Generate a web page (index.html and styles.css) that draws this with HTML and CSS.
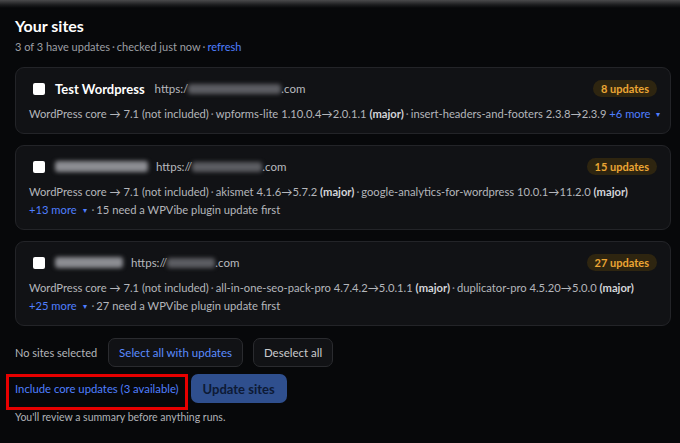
FILE: index.html
```html
<!DOCTYPE html>
<html>
<head>
<meta charset="utf-8">
<link rel="stylesheet" href="styles.css">
</head>
<body>
<main class="page">
  <h1 class="title">Your sites</h1>
  <p class="sub">3 of 3 have updates<span class="dot">·</span>checked just now<span class="dot">·</span><a class="link">refresh</a></p>

  <section class="cards">
    <div class="card">
      <div class="head">
        <span class="check"></span>
        <span class="name">Test Wordpress</span>
        <span class="url">https:/<span class="blur" style="width:93px"></span>.com</span>
        <span class="badge">8 updates</span>
      </div>
      <div class="line">WordPress core → 7.1 (not included)<span class="dot">·</span>wpforms-lite 1.10.0.4→2.0.1.1 <b>(major)</b><span class="dot">·</span>insert-headers-and-footers 2.3.8→2.3.9 <a class="link">+6 more <span class="caret">▾</span></a></div>
    </div>

    <div class="card">
      <div class="head">
        <span class="check"></span>
        <span class="blur name-blur" style="width:93px"></span>
        <span class="url">https://<span class="blur" style="width:70px"></span>.com</span>
        <span class="badge">15 updates</span>
      </div>
      <div class="line">WordPress core → 7.1 (not included)<span class="dot">·</span>akismet 4.1.6→5.7.2 <b>(major)</b><span class="dot">·</span>google-analytics-for-wordpress 10.0.1→11.2.0 <b>(major)</b></div>
      <div class="line"><a class="link">+13 more <span class="caret">▾</span></a> <span class="dot">·</span>15 need a WPVibe plugin update first</div>
    </div>

    <div class="card">
      <div class="head">
        <span class="check"></span>
        <span class="blur name-blur" style="width:68px"></span>
        <span class="url">https://<span class="blur" style="width:48px"></span>.com</span>
        <span class="badge">27 updates</span>
      </div>
      <div class="line">WordPress core → 7.1 (not included)<span class="dot">·</span>all-in-one-seo-pack-pro 4.7.4.2→5.0.1.1 <b>(major)</b><span class="dot">·</span>duplicator-pro 4.5.20→5.0.0 <b>(major)</b></div>
      <div class="line"><a class="link">+25 more <span class="caret">▾</span></a> <span class="dot">·</span>27 need a WPVibe plugin update first</div>
    </div>
  </section>

  <div class="actions">
    <span class="muted">No sites selected</span>
    <button class="btn btn-blue">Select all with updates</button>
    <button class="btn">Deselect all</button>
  </div>

  <div class="actions2">
    <span class="core"><a class="link">Include core updates (3 available)</a><span class="mark"></span></span>
    <button class="btn-primary">Update sites</button>
  </div>

  <p class="note">You'll review a summary before anything runs.</p>
</main>
</body>
</html>
```
FILE: styles.css
```css
* { box-sizing: border-box; }
html, body { margin: 0; padding: 0; }
body {
  width: 680px;
  height: 443px;
  overflow: hidden;
  background: linear-gradient(#4a4a4c 0px, #1a1b1d 5px, #07080a 8px) #07080a;
  font-family: Lato, "Noto Sans", sans-serif;
  color: #b4b6bb;
}
.page { padding: 16px 9px 0 15px; }
.title {
  margin: 0;
  font-size: 16px;
  font-weight: 700;
  color: #ffffff;
  line-height: 20px;
}
.sub {
  margin: 3px 0 0;
  font-size: 11px;
  line-height: 16px;
  color: #9d9fa4;
}
.dot { margin: 0 2px; color: #8a8c91; }
.link { color: #4f7fff; text-decoration: none; }
.caret {
  font-size: 8px;
  line-height: 1;
  margin-left: 3px;
  vertical-align: 1px;
}

.cards {
  margin-top: 12px;
  display: flex;
  flex-direction: column;
  gap: 11px;
}
.card {
  background: #111215;
  border: 1px solid #232428;
  border-radius: 9px;
  padding: 12px 13px 10px 13px;
}
.head {
  display: flex;
  align-items: center;
  height: 17px;
  margin-bottom: 8px;
}
.check {
  width: 12px;
  height: 12px;
  background: #ffffff;
  border-radius: 2px;
  margin-left: 4px;
  margin-right: 10px;
  flex: none;
}
.name {
  font-size: 13px;
  font-weight: 700;
  color: #ffffff;
  margin-right: 10px;
}
.url {
  font-size: 11.5px;
  color: #b8babf;
  display: flex;
  align-items: center;
}
.blur {
  display: inline-block;
  height: 10px;
  background: #5c5d62;
  filter: blur(2px);
  border-radius: 3px;
}
.name-blur {
  background: #8c8d92;
  height: 11px;
  margin-right: 8px;
}
.badge {
  margin-left: auto;
  background: #2e2510;
  color: #eba534;
  font-size: 11px;
  font-weight: 700;
  border-radius: 9px;
  padding: 0 8px;
  height: 17px;
  line-height: 17px;
}
.line {
  font-size: 11.2px;
  line-height: 18px;
  height: 18px;
  color: #b4b6bb;
  white-space: nowrap;
}
.line b { color: #d4d5d9; font-weight: 700; }

.actions {
  margin-top: 12px;
  display: flex;
  align-items: center;
  gap: 8px;
}
.muted { font-size: 11px; color: #b4b6bb; margin-right: 3px; }
.btn {
  font-family: inherit;
  font-size: 11.5px;
  background: #111215;
  color: #c9cace;
  border: 1px solid #2a2b2f;
  border-radius: 7px;
  height: 29px;
  padding: 0 10px;
}
.btn-blue { color: #5b8cff; margin-right: 2px; }

.actions2 {
  margin-top: 7px;
  display: flex;
  align-items: center;
  gap: 12px;
}
.core {
  position: relative;
  font-size: 11.3px;
  line-height: 29px;
}
.mark {
  position: absolute;
  left: -9px;
  right: -9px;
  top: 0;
  height: 36px;
  border: 3px solid #e60000;
}
.btn-primary {
  font-family: inherit;
  font-size: 13px;
  font-weight: 700;
  background: #2f4f8e;
  color: #0d1a35;
  border: none;
  border-radius: 7px;
  height: 29px;
  padding: 0 12px;
}
.note {
  margin: 8px 0 0;
  font-size: 10.5px;
  color: #b0b2b7;
}
```
